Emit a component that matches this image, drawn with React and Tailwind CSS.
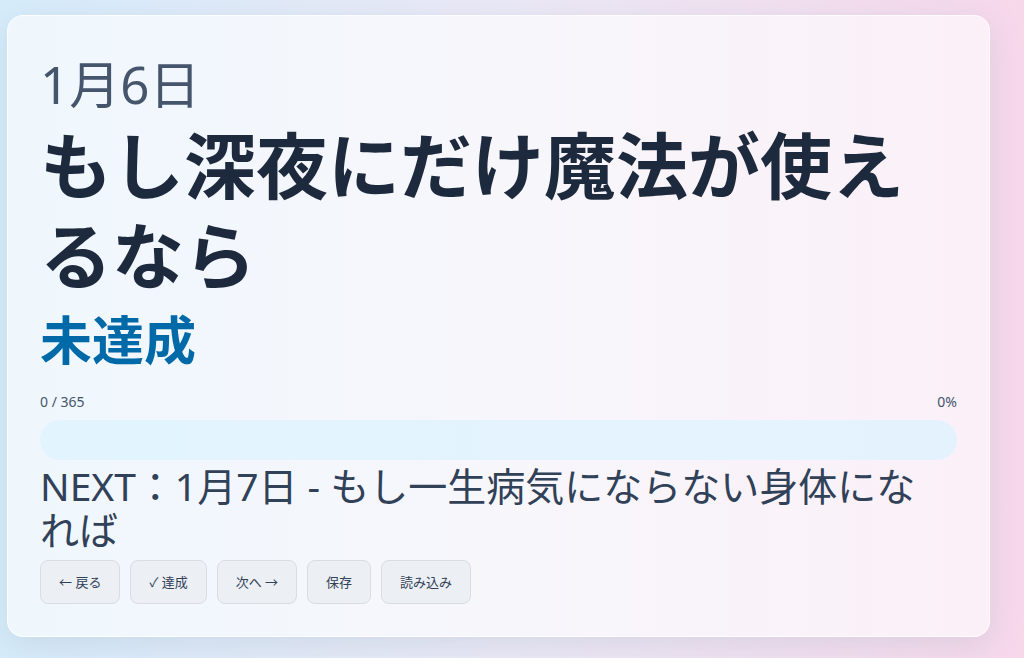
import React from 'react';

const buttons = ['← 戻る', '✓ 達成', '次へ →', '保存', '読み込み'];

export default function App() {
  const done = 0;
  const total = 365;
  const pct = Math.round((done / total) * 100);

  return (
    <div
      className="min-h-screen w-full bg-linear-to-r from-[#d6ecfb] via-[#ebe9f6] to-[#f7d8eb] pt-[15px] pl-[7px] pb-6"
      style={{ fontFamily: '"Noto Sans", "Noto Sans CJK JP", sans-serif' }}
    >
      <div className="w-[983px] rounded-2xl border border-white/70 bg-white/60 px-8 pt-8 pb-8 shadow-[0_8px_30px_rgba(148,163,184,0.25)]">
        {/* date */}
        <div className="text-[51px] leading-[72px] text-slate-600">1月6日</div>

        {/* title */}
        <h1 className="text-[72px] leading-[90px] font-bold text-slate-800">
          もし深夜にだけ魔法が使えるなら
        </h1>

        {/* status */}
        <div className="mt-2 text-[52px] leading-[64px] font-bold text-sky-700">未達成</div>

        {/* progress */}
        <div className="mt-5 flex justify-between text-sm leading-5 text-slate-600">
          <span>
            {done} / {total}
          </span>
          <span>{pct}%</span>
        </div>
        <div className="mt-2 h-10 w-full rounded-full bg-sky-100/80 overflow-hidden">
          <div className="h-full rounded-full bg-sky-500" style={{ width: `${pct}%` }} />
        </div>

        {/* next */}
        <p className="mt-1 pr-5 text-[39px] leading-[44px] text-slate-700">
          NEXT：1月7日 - もし一生病気にならない身体になれば
        </p>

        {/* actions */}
        <div className="mt-2 flex gap-[10px]">
          {buttons.map((b) => (
            <button
              key={b}
              className="rounded-lg border border-[#d9dde3] bg-[#eceff3] px-[18px] py-3 text-[13px] leading-[18px] text-slate-700"
            >
              {b}
            </button>
          ))}
        </div>
      </div>
    </div>
  );
}
